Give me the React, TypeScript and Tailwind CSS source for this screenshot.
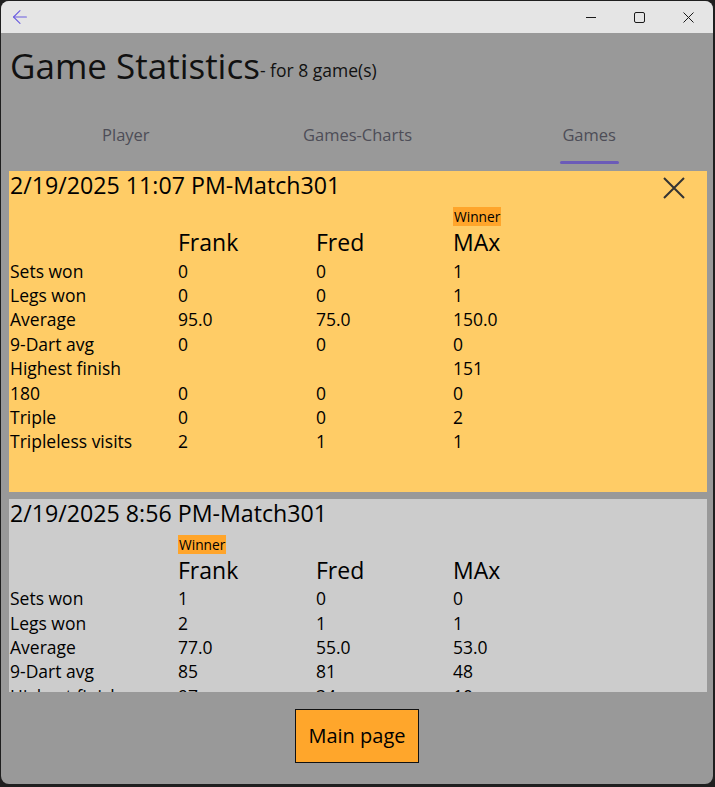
import { ArrowLeft } from "lucide-react";

type Game = {
  title: string;
  winner: number;
  closable: boolean;
  bg: string;
  rows: [string, string, string, string][];
};

const players = ["Frank", "Fred", "MAx"];

const games: Game[] = [
  {
    title: "2/19/2025 11:07 PM-Match301",
    winner: 2,
    closable: true,
    bg: "bg-[#ffcc66]",
    rows: [
      ["Sets won", "0", "0", "1"],
      ["Legs won", "0", "0", "1"],
      ["Average", "95.0", "75.0", "150.0"],
      ["9-Dart avg", "0", "0", "0"],
      ["Highest finish", "", "", "151"],
      ["180", "0", "0", "0"],
      ["Triple", "0", "0", "2"],
      ["Tripleless visits", "2", "1", "1"],
    ],
  },
  {
    title: "2/19/2025 8:56 PM-Match301",
    winner: 0,
    closable: false,
    bg: "bg-[#cccccc]",
    rows: [
      ["Sets won", "1", "0", "0"],
      ["Legs won", "2", "1", "1"],
      ["Average", "77.0", "55.0", "53.0"],
      ["9-Dart avg", "85", "81", "48"],
      ["Highest finish", "97", "34", "10"],
      ["180", "0", "0", "0"],
      ["Triple", "1", "0", "0"],
      ["Tripleless visits", "3", "2", "2"],
    ],
  },
];

const tabs = ["Player", "Games-Charts", "Games"];

const GameCard = ({ game }: { game: Game }) => (
  <div className={`${game.bg} pl-[1px] pb-[38px] shrink-0`}>
    <div className="flex items-start justify-between">
      <h2 className="text-[23.2px] leading-[29px] text-black">{game.title}</h2>
      {game.closable && (
        <svg width="24" height="22" viewBox="0 0 24 22" className="mt-[6px] mr-[21px]" fill="none" stroke="#333" strokeWidth="2">
          <path d="M2 1 L22 21 M22 1 L2 21" />
        </svg>
      )}
    </div>
    <div className="grid grid-cols-[168px_138px_137px_1fr] mt-[4px] h-[19px]">
      <div />
      {players.map((p, i) => (
        <div key={p}>
          {game.winner === i && (
            <span className="inline-block bg-[#ffa52b] text-[13.75px] leading-[19px] px-[1px] text-black">Winner</span>
          )}
        </div>
      ))}
    </div>
    <div className="grid grid-cols-[168px_138px_137px_1fr] mt-[4px]">
      <div />
      {players.map((p) => (
        <div key={p} className="text-[23px] leading-[30px] text-black">{p}</div>
      ))}
    </div>
    <div className="mt-[1.5px]">
      {game.rows.map((r) => (
        <div key={r[0]} className="grid grid-cols-[168px_138px_137px_1fr] text-[17.5px] leading-[24.4px] text-black">
          <div>{r[0]}</div>
          <div>{r[1]}</div>
          <div>{r[2]}</div>
          <div>{r[3]}</div>
        </div>
      ))}
    </div>
  </div>
);

export default function App() {
  return (
    <div className="w-[715px] h-[787px] bg-[#1f1f1f] pt-[1px] pl-[1px] pr-[2px] overflow-hidden" style={{ fontFamily: '"Open Sans", "Noto Sans", sans-serif' }}>
      <div className="h-[783px] rounded-lg overflow-hidden flex flex-col bg-[#999999]">
        {/* title bar */}
        <div className="h-[32px] bg-[#e5e5e5] flex items-center shrink-0">
          <ArrowLeft size={22} strokeWidth={1.2} className="ml-[8px] text-[#6a5ce0]" />
          <div className="ml-auto flex h-full">
            <div className="w-[49px] flex items-center justify-center">
              <svg width="10" height="10" viewBox="0 0 10 10"><path d="M0 5.5 H10" stroke="#1a1a1a" strokeWidth="1" /></svg>
            </div>
            <div className="w-[49px] flex items-center justify-center">
              <svg width="11" height="11" viewBox="0 0 11 11" fill="none"><rect x="0.5" y="0.5" width="10" height="10" rx="1.5" stroke="#1a1a1a" strokeWidth="1" /></svg>
            </div>
            <div className="w-[49px] flex items-center justify-center">
              <svg width="11" height="11" viewBox="0 0 11 11" fill="none"><path d="M0.5 0.5 L10.5 10.5 M10.5 0.5 L0.5 10.5" stroke="#1a1a1a" strokeWidth="1" /></svg>
            </div>
          </div>
        </div>

        {/* page title */}
        <div className="flex items-end pl-[9px] pt-[9px] text-[#111]">
          <h1 className="text-[35px] leading-[48px]">Game Statistics</h1>
          <span className="text-[17.5px] leading-[24px] pb-[8px]">- for 8 game(s)</span>
        </div>

        {/* tabs */}
        <div className="grid grid-cols-3 pl-[9px] pr-[8px] mt-[34px] shrink-0">
          {tabs.map((t, i) => (
            <div key={t} className="flex flex-col items-center">
              <span className="text-[16.5px] leading-[22px] text-[#4d4d57]">{t}</span>
              <div className={`mt-[15px] h-[3px] w-[59px] rounded-full ${i === 2 ? "bg-[#6b5bb8]" : "bg-transparent"}`} />
            </div>
          ))}
        </div>

        {/* games list */}
        <div className="mt-[7px] h-[521px] ml-[8px] mr-[6px] overflow-hidden flex flex-col gap-[7px] shrink-0">
          {games.map((g) => (
            <GameCard key={g.title} game={g} />
          ))}
        </div>

        {/* footer */}
        <div className="flex justify-center mt-[17px]">
          <button className="w-[124px] h-[54px] bg-[#ffa62b] border-[1.5px] border-[#111] text-[20px] leading-[28px] text-black">
            Main page
          </button>
        </div>
      </div>
    </div>
  );
}
